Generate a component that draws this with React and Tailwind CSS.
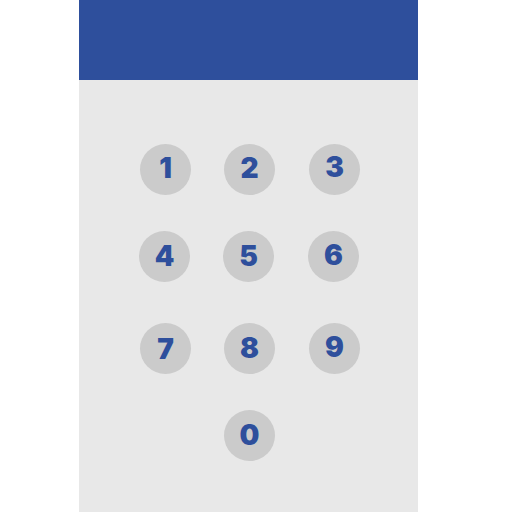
export default function App() {
  const Btn = ({ d, off = "-mt-[2px]", className = "" }) => (
    <div
      className={`w-[51px] h-[51px] rounded-full bg-[#cbcbcb] flex items-center justify-center text-[#2e4f9c] text-[28px] font-black leading-none ${className}`}
      style={{ fontFamily: "Inter, 'Liberation Sans', sans-serif" }}
    >
      <span className={off}>{d}</span>
    </div>
  );
  return (
    <div className="w-[512px] h-[512px] bg-white flex">
      <div className="ml-[79px] w-[339px] h-[512px] bg-[#e8e8e8] flex flex-col">
        <div className="h-[80px] bg-[#2e4f9c]" />
        <div className="flex mt-[64px] pl-[61px]">
          <Btn d="1" off="-mt-[3px]" />
          <Btn d="2" off="-mt-[3px]" className="ml-[33px]" />
          <Btn d="3" off="-mt-[6px]" className="ml-[34px]" />
        </div>
        <div className="flex mt-[36px] pl-[60px]">
          <Btn d="4" off="-mt-[1px]" />
          <Btn d="5" off="-mt-[2px]" className="ml-[33px]" />
          <Btn d="6" off="-mt-[4px]" className="ml-[34px]" />
        </div>
        <div className="flex mt-[41px] pl-[61px]">
          <Btn d="7" off="mt-0" />
          <Btn d="8" off="-mt-[2px]" className="ml-[33px]" />
          <Btn d="9" off="-mt-[4px]" className="ml-[34px]" />
        </div>
        <div className="flex mt-[36px] pl-[145px]">
          <Btn d="0" off="-mt-[1px]" />
        </div>
      </div>
    </div>
  );
}
